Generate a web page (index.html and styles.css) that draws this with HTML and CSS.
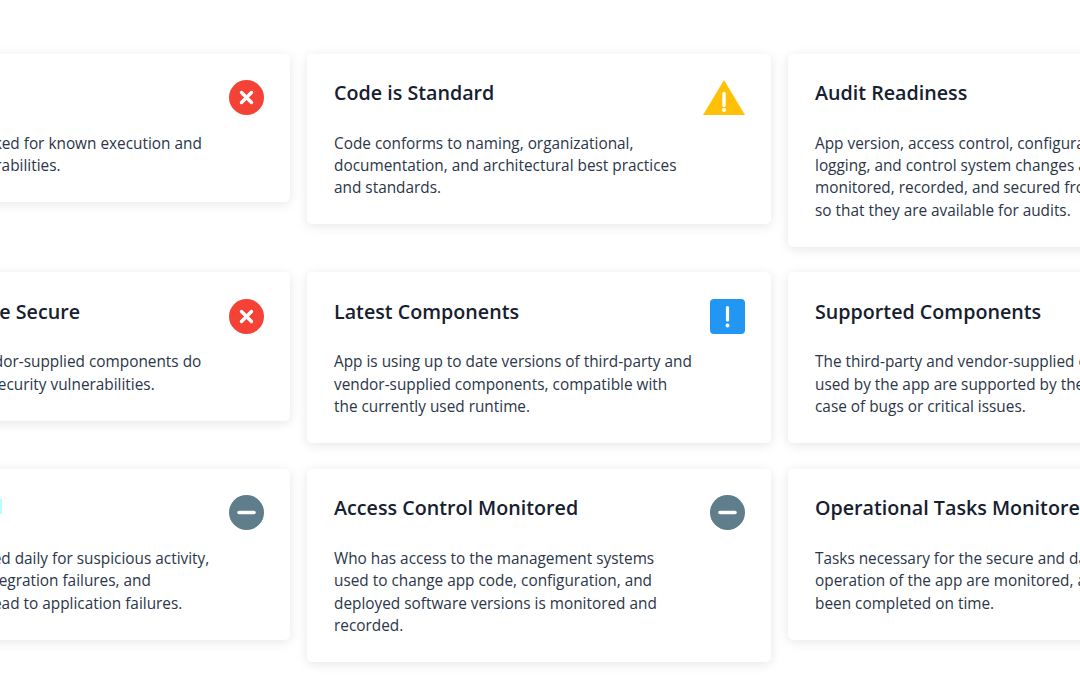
FILE: index.html
```html
<!DOCTYPE html>
<html lang="en">
<head>
<meta charset="utf-8">
<title>Checks</title>
<link rel="stylesheet" href="styles.css">
</head>
<body>
<main class="grid">
  <section class="card"><div class="copy"><h3>Security Tested</h3><p>Project code is checked for known execution and cloud security vulnerabilities.</p></div>
    <svg class="icon" viewBox="0 0 35 35"><circle cx="17.5" cy="17.5" r="17.5" fill="#f44336"/><path d="M12.5 12.5l10 10M22.5 12.5l-10 10" stroke="#fff" stroke-width="3.4" stroke-linecap="round"/></svg></section>
  <section class="card"><div class="copy"><h3>Code is Standard</h3><p>Code conforms to naming, organizational, documentation, and architectural best practices and standards.</p></div>
    <svg class="icon icon-wide" viewBox="0 0 42 35"><path d="M21 0L42 35H0z" fill="#ffc107"/><path d="M21 13.500v12" stroke="#fff" stroke-width="3.400" stroke-linecap="round"/><circle cx="21" cy="30" r="2" fill="#fff"/></svg></section>
  <section class="card"><div class="copy"><h3>Audit Readiness</h3><p>App version, access control, configuration, event logging, and control system changes are monitored, recorded, and secured from alteration so that they are available for audits.</p></div>
    <svg class="icon" viewBox="0 0 35 35"><circle cx="17.5" cy="17.5" r="17.5" fill="#607d8b"/></svg></section>

  <section class="card"><div class="copy"><h3>Components are Secure</h3><p>Third-party and vendor-supplied components do not contain known security vulnerabilities.</p></div>
    <svg class="icon" viewBox="0 0 35 35"><circle cx="17.5" cy="17.5" r="17.5" fill="#f44336"/><path d="M12.5 12.5l10 10M22.5 12.5l-10 10" stroke="#fff" stroke-width="3.4" stroke-linecap="round"/></svg></section>
  <section class="card"><div class="copy"><h3>Latest Components</h3><p>App is using up to date versions of third-party and vendor-supplied components, compatible with the currently used runtime.</p></div>
    <svg class="icon" viewBox="0 0 35 35"><rect width="35" height="35" rx="4" fill="#2196f3"/><path d="M17.500 8.500v12.500" stroke="#fff" stroke-width="3.200" stroke-linecap="round"/><circle cx="17.500" cy="26.500" r="2" fill="#fff"/></svg></section>
  <section class="card"><div class="copy"><h3>Supported Components</h3><p>The third-party and vendor-supplied components used by the app are supported by the vendor in case of bugs or critical issues.</p></div>
    <svg class="icon" viewBox="0 0 35 35"><circle cx="17.5" cy="17.5" r="17.5" fill="#607d8b"/></svg></section>

  <section class="card"><div class="copy"><h3>Logs Reviewed</h3><span class="marker"></span><p>App logs are reviewed daily for suspicious activity, all errors, system integration failures, and incidents that may lead to application failures.</p></div>
    <svg class="icon" viewBox="0 0 35 35"><circle cx="17.5" cy="17.5" r="17.5" fill="#607d8b"/><path d="M10 17.500h15" stroke="#fff" stroke-width="3.600" stroke-linecap="round"/></svg></section>
  <section class="card"><div class="copy"><h3>Access Control Monitored</h3><p>Who has access to the management systems used to change app code, configuration, and deployed software versions is monitored and recorded.</p></div>
    <svg class="icon" viewBox="0 0 35 35"><circle cx="17.5" cy="17.5" r="17.5" fill="#607d8b"/><path d="M10 17.500h15" stroke="#fff" stroke-width="3.600" stroke-linecap="round"/></svg></section>
  <section class="card"><div class="copy"><h3>Operational Tasks Monitored</h3><p>Tasks necessary for the secure and day-to-day operation of the app are monitored, and have been completed on time.</p></div>
    <svg class="icon" viewBox="0 0 35 35"><circle cx="17.5" cy="17.5" r="17.5" fill="#607d8b"/></svg></section>
</main>
</body>
</html>
```
FILE: styles.css
```css
html, body { margin: 0; padding: 0; background: #fff; overflow: hidden; height: 675px; }
body { font-family: "Open Sans", "Noto Sans", sans-serif; color: #2b3648; }
.grid {
  display: grid;
  grid-template-columns: repeat(3, 464px);
  grid-template-rows: 192.4px 170.8px auto;
  column-gap: 17px;
  row-gap: 26px;
  align-items: start;
  width: 1426px;
  margin-left: -174px;
  padding-top: 54px;
}
.card {
  position: relative;
  display: flex;
  justify-content: space-between;
  align-items: flex-start;
  background: #fff;
  border-radius: 5px;
  box-shadow: 0 2px 12px rgba(0, 0, 0, 0.1);
  padding: 26.2px 26px 24.7px 27px;
}
.copy { width: 358px; flex: none; }
h3 { margin: 0 0 26.9px; font-size: 19.7px; line-height: 26px; font-weight: 600; color: #16202f; }
p { margin: 0; font-size: 15.36px; line-height: 22.2px; }
.icon { flex: none; height: 35px; width: 35px; }
.icon-wide { width: 42px; }
.marker { position: absolute; left: 170px; top: 30px; width: 6px; height: 15px; background: #b3ffff; }
```
